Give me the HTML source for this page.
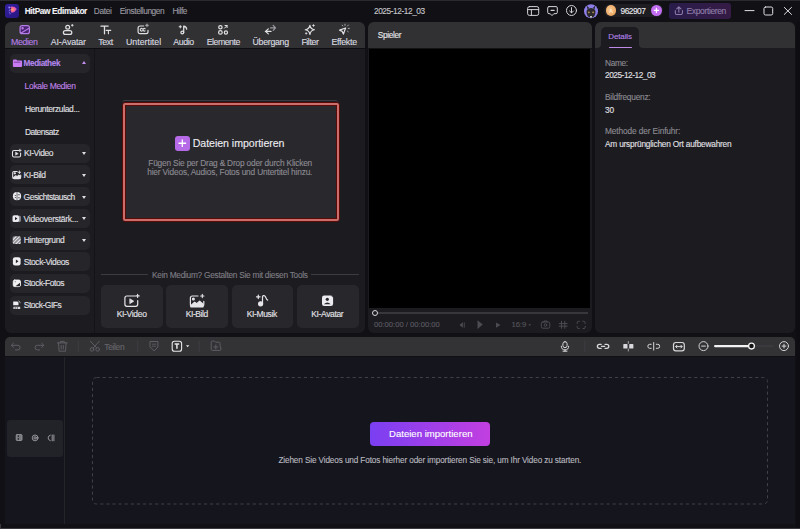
<!DOCTYPE html>
<html><head><meta charset="utf-8">
<style>
*{margin:0;padding:0;box-sizing:border-box}
html,body{width:800px;height:529px;overflow:hidden;background:#111015;font-family:"Liberation Sans",sans-serif;color:#e6e6ea}
.a{position:absolute}
.t{position:absolute;white-space:nowrap;line-height:10px;font-size:8px}
.tx{position:absolute;white-space:nowrap;line-height:12px;-webkit-text-stroke:0.12px currentColor}
svg{position:absolute;overflow:visible}
.si{position:absolute;left:10px;width:80px;height:19px;border-radius:5px;background:#26252a}
.sl{position:absolute;left:23.5px;font-size:7.7px;color:#dcdce0;line-height:10px;white-space:nowrap}
.car{position:absolute;left:82px;width:0;height:0;border-left:2.5px solid transparent;border-right:2.5px solid transparent;border-top:3px solid #e0e0e4}
.tl{position:absolute;top:37px;font-size:8.1px;color:#d4d4d8;line-height:10px;white-space:nowrap}
.card{position:absolute;top:285px;width:61.5px;height:42.5px;border-radius:5px;background:#28272c}
.cl{position:absolute;top:309px;font-size:8px;color:#e0e0e4;line-height:10px;white-space:nowrap}
</style></head>
<body>
<!-- title bar -->
<div class="a" style="left:0;top:0;width:800px;height:1px;background:#2b2a30"></div>
<div class="a" style="left:5px;top:4px;width:14px;height:13.5px;border-radius:3px;background:linear-gradient(135deg,#3220a0,#281680)"></div>
<svg style="left:0;top:0" width="22" height="22" viewBox="0 0 22 22"><defs><radialGradient id="lg" cx="0.35" cy="0.5" r="0.7"><stop offset="0" stop-color="#ffa060"/><stop offset="0.45" stop-color="#f0609a"/><stop offset="1" stop-color="#c040e0"/></radialGradient></defs>
<path d="M11 6.6q3.2-0.9 5.9 2.3q-1.7 3.3-5 3.9q-1.6-0.6-1.5-3.2q-0.4-2.2 0.6-3z" fill="url(#lg)"/>
<circle cx="9.3" cy="7.5" r="1" fill="#9a8cf8"/><circle cx="9.6" cy="10.3" r="0.9" fill="#7a6ae8"/><path d="M8.8 12.2l1.8 1.2M9.5 13.8l0.8 0.3" stroke="#8878f0" stroke-width="0.8"/><circle cx="10.6" cy="8.6" r="0.6" fill="#1a1060"/><circle cx="10.6" cy="11" r="0.5" fill="#1a1060"/></svg>


<!-- title right -->
<svg style="left:0;top:0" width="800" height="22" viewBox="0 0 800 22" fill="none" stroke-linecap="round" stroke-linejoin="round">
 <g stroke="#d4d4d8" stroke-width="1">
  <rect x="527.6" y="6.6" width="11.1" height="8.8" rx="1.8"/><path d="M527.6 9.6h11.1M531.4 9.6v5.8"/>
  <path d="M549 6.6h7a1.3 1.3 0 0 1 1.3 1.3v4.5a1.3 1.3 0 0 1-1.3 1.3h-2.2l-1.8 1.9-1.8-1.9h-1.2a1.3 1.3 0 0 1-1.3-1.3v-4.5a1.3 1.3 0 0 1 1.3-1.3z"/><path d="M551 10.3h3.2" stroke-width="1.2"/>
  <circle cx="571.5" cy="10.5" r="5"/><path d="M571.5 7.6v5M569.6 11l1.9 1.9 1.9-1.9"/>
 </g>
 <circle cx="591" cy="11.2" r="7" fill="#8c7ee6"/>
 <path d="M586.5 12q0-3.5 4.5-4q4.5 0.5 4.5 4q0 5-4.5 6q-4.5-1-4.5-6z" fill="#2a2a2c"/><path d="M587.5 9.5l-0.8-4 2.5 2.5M594.5 9.5l0.8-4-2.5 2.5" fill="#2a2a2c"/>
 <circle cx="588.9" cy="12.4" r="0.8" fill="#d8a050"/><circle cx="593.1" cy="12.4" r="0.8" fill="#d8a050"/><rect x="590" y="16.3" width="2" height="1.2" fill="#fff"/>
</svg>
<div class="a" style="left:603.5px;top:4.3px;width:59.5px;height:12.6px;border-radius:6.3px;background:#1e1d22"></div>
<div class="a" style="left:605.5px;top:5.2px;width:10.8px;height:10.8px;border-radius:50%;background:radial-gradient(circle at 40% 40%,#f8c890,#e89a50)"></div>
<div class="t" style="left:609px;top:6.2px;font-size:6px;color:#fff0dd">A</div>
<div class="a" style="left:651px;top:5.2px;width:10.8px;height:10.8px;border-radius:50%;background:#c36ef0"></div>
<svg style="left:651px;top:5.2px" width="11" height="11"><path d="M5.4 2.8v5.2M2.8 5.4h5.2" stroke="#fff" stroke-width="1.1"/></svg>
<div class="a" style="left:669.4px;top:2.5px;width:61.7px;height:16.4px;border-radius:3px;background:linear-gradient(90deg,#291c4a,#351b45)"></div>
<svg style="left:0;top:0" width="800" height="22" viewBox="0 0 800 22" fill="none" stroke-linecap="round" stroke-linejoin="round">
 <g stroke="#8e7cae" stroke-width="1.05"><path d="M678.85 6.8v5.4M676.7 8.9l2.15-2.1 2.15 2.1"/><path d="M675.3 10.6v2.4a1.4 1.4 0 0 0 1.4 1.4h4.3a1.4 1.4 0 0 0 1.4-1.4v-2.4"/></g>
 <g stroke="#e0e0e4" stroke-width="1"><path d="M745 10.6h9"/><rect x="764" y="7" width="8.7" height="8" rx="1.5"/><path d="M784.3 7.4l7.2 7M791.5 7.4l-7.2 7"/></g>
</svg>

<!-- left panel -->
<div class="a" style="left:5px;top:22px;width:360px;height:311px;border-radius:6px;background:#1c1b20;overflow:hidden">
  <div class="a" style="left:0;top:0;width:360px;height:26px;background:#313133"></div>
  <div class="a" style="left:0;top:26px;width:360px;height:1px;background:#0e0e11"></div>
  <div class="a" style="left:89px;top:27px;width:1px;height:284px;background:#141318"></div>
</div>
<!-- toolbar labels -->

<!-- sidebar -->
<div class="si" style="top:54px"></div>
<div class="a" style="left:82px;top:61px;width:0;height:0;border-left:2.5px solid transparent;border-right:2.5px solid transparent;border-bottom:3px solid #c48ef0"></div>
<div class="si" style="top:143.5px"></div><div class="car" style="top:151.5px"></div>
<div class="si" style="top:165.2px"></div><div class="car" style="top:173.5px"></div>
<div class="si" style="top:187px"></div><div class="car" style="top:195.5px"></div>
<div class="si" style="top:208.8px"></div><div class="car" style="top:217px"></div>
<div class="si" style="top:230.5px"></div><div class="car" style="top:238.5px"></div>
<div class="si" style="top:252.2px"></div>
<div class="si" style="top:273.9px"></div>
<div class="si" style="top:295.5px"></div>

<!-- import box -->
<div class="a" style="left:122.3px;top:100.3px;width:216px;height:3px;border-radius:3px 3px 0 0;border-top:1px solid #3c3b41"></div>
<div class="a" style="left:122px;top:102px;width:218.3px;height:120px;border:1px solid #5c0a08;border-radius:3px;background:#29282d"></div>
<div class="a" style="left:123px;top:103px;width:216.3px;height:118px;border:2px solid #c96e6a;border-radius:2px"></div>
<div class="a" style="left:125px;top:105px;width:212.3px;height:114px;border:0.7px solid #5c0a08"></div>
<div class="a" style="left:175px;top:136.2px;width:14.6px;height:14.5px;border-radius:3px;background:#b66ae8"></div>
<svg style="left:175px;top:136.2px" width="15" height="15"><path d="M7.3 3.5v7.5M3.5 7.25h7.6" stroke="#fff" stroke-width="1.3"/></svg>

<!-- tools -->
<div class="a" style="left:100.5px;top:274px;width:47px;height:1px;background:#3c3b41"></div>
<div class="a" style="left:310.5px;top:274px;width:48px;height:1px;background:#3c3b41"></div>
<div class="card" style="left:101.2px"></div>
<div class="card" style="left:166.3px"></div>
<div class="card" style="left:231.7px"></div>
<div class="card" style="left:297px"></div>


<!-- toolbar icons -->
<svg style="left:0;top:0" width="800" height="60" viewBox="0 0 800 60" fill="none" stroke-linecap="round" stroke-linejoin="round">
 <g stroke="#b57ee6" stroke-width="1.2"><rect x="20.1" y="25.7" width="9.3" height="8" rx="2" fill="#4a2472"/><path d="M21.2 33 L28.6 28.6"/><circle cx="22.6" cy="28.2" r="0.6" fill="#b57ee6"/></g>
 <g stroke="#e0e0e4" stroke-width="1.25">
  <circle cx="67.7" cy="27.2" r="1.9"/><rect x="63.4" y="30.5" width="8.4" height="3.9" rx="1.95"/>
  <path d="M72.3 24.4v1.8M71.4 25.3h1.8" stroke-width="0.9"/>
  <path d="M100.9 26.1h7.3M104.5 26.1v7.7" stroke-width="1.3"/><path d="M106.2 30.4h4.5M108.4 30.4v3.4" stroke-width="1.1"/>
  <path d="M143.6 26h-3.6a1.9 1.9 0 0 0-1.9 1.9v3.9a1.9 1.9 0 0 0 1.9 1.9h6.1a1.9 1.9 0 0 0 1.9-1.9v-1.5" stroke-width="1.2"/><path d="M142.3 28.7a1.3 1.3 0 1 0 0 2.1M145.1 28.7a1.3 1.3 0 1 0 0 2.1" stroke-width="1.1"/>
  <path d="M147 24v2.6M145.7 25.3h2.6" stroke-width="1.1" stroke="#b0b0b6"/>
  <circle cx="182.3" cy="32.4" r="1.4"/><path d="M183.7 32.4V26.1q2.5 0.3 3 3"/><path d="M180.3 25.6v2.3M179.15 26.75h2.3" stroke-width="1"/>
  <circle cx="220.4" cy="27.2" r="1.7"/><circle cx="220.4" cy="32.4" r="1.8"/><circle cx="225.9" cy="32.4" r="1.6"/><path d="M224.5 28.2l2.6-2.6M225 25.5h2.1v2.1" stroke-width="1"/>
  <path d="M271 31.4h-5.6M268.3 28.9l-2.8 2.5 2.8 2.5"/><path d="M270.5 27.9h4.8M273.2 25.4l2.3 2.5-2.3 2.5" stroke="#9a9aa0"/>
  <path d="M309.9 25.4q0.6 3.7 4.5 4.35q-3.9 0.65-4.5 4.6q-0.6-3.95-4.6-4.6q4-0.65 4.6-4.35z"/><path d="M313.5 24.6v1.8M312.6 25.5h1.8M306.2 32.6v1.6M305.4 33.4h1.6" stroke-width="0.8"/>
  <path d="M339.6 30.2l6-2.2-2.2 6.1-1.2-2.7z" stroke-width="1.25"/><path d="M342.2 25.2l0.5 0.7M345 24.2v1.2M348.4 25l-0.9 1M349.4 28.4h-1.2M348.3 31.8l-0.8-0.6" stroke-width="1" stroke="#a8a8ae"/>
 </g>
</svg>
<!-- sidebar icons -->
<svg style="left:0;top:0" width="100" height="320" viewBox="0 0 100 320" fill="none" stroke-linecap="round" stroke-linejoin="round">
 <path d="M12.9 60.5a1 1 0 0 1 1-1h2.4l1 1h3.8a1 1 0 0 1 1 1v4.6a1 1 0 0 1-1 1h-7.2a1 1 0 0 1-1-1z" fill="#c97cf2"/><path d="M14.3 62.2h5.7" stroke="#5a2a80" stroke-width="0.7"/>
 <g stroke="#e6e6ea" stroke-width="1.05">
  <path d="M18.6 150.4h-4.6a1.5 1.5 0 0 0-1.5 1.5v3.5a1.5 1.5 0 0 0 1.5 1.5h5.1a1.5 1.5 0 0 0 1.5-1.5v-2.3"/><path d="M15.8 152.3l2.4 1.35-2.4 1.35z" fill="#e6e6ea" stroke-width="0.6"/><path d="M19.9 149.2v2.4M18.7 150.4h2.4" stroke-width="0.9"/>
  <path d="M17.2 171.4h-3.2a1.3 1.3 0 0 0-1.3 1.3v4.6a1.3 1.3 0 0 0 1.3 1.3h5.4a1.3 1.3 0 0 0 1.3-1.3v-2.2"/><path d="M13.2 178l2.5-2.3 1.5 1 1.6-1.6 1.5 1.4v1.8h-7z" fill="#e6e6ea"/><circle cx="14.8" cy="173.3" r="0.6" fill="#e6e6ea"/><path d="M19.4 171v2.6M18.1 172.3h2.6" stroke-width="0.9"/>
 </g>
 <circle cx="17" cy="196.2" r="4.1" fill="#ececf0"/><path d="M17 192.2v8" stroke="#26252a" stroke-width="0.6"/><circle cx="15.3" cy="195.5" r="0.55" fill="#26252a"/><circle cx="15.3" cy="197.5" r="0.55" fill="#26252a"/><path d="M18.2 194.8h1.3M18.2 197.8h1.3" stroke="#26252a" stroke-width="0.7"/>
 <rect x="12.5" y="215.3" width="6.6" height="6.7" rx="1.6" fill="#ececf0"/><path d="M15 216.9l2.5 1.7-2.5 1.7z" fill="#26252a"/><path d="M19.3 215.4l1.3 1.2v4.6l-1.3 1z" fill="#bdbdc2"/>
 <g fill="#dcdce0"><rect x="12.6" y="236.3" width="8.2" height="7.7" rx="1.5" fill="#8a8a90"/>
  <path d="M13 239l2.5-2.5h1.5l-4 4zM13 242.5l6-6h1.3l-7.3 7.3zM15 244l5.5-5.5v1.5l-4 4zM18.5 244l2-2v1.4l-0.6 0.6z" fill="#ececf0"/></g>
 <rect x="12.9" y="257.2" width="7.7" height="8.3" rx="2.1" fill="#f0f0f2"/><path d="M15.9 259.4l2.6 1.95-2.6 1.95z" fill="#26252a"/>
 <rect x="13.3" y="280.1" width="7.1" height="6.5" rx="1.4" stroke="#f0f0f2" stroke-width="1" fill="#f0f0f2"/><path d="M15.4 286.3l4.6-3.6v3.6z" fill="#26252a"/><circle cx="15.3" cy="281.7" r="0.7" fill="#9a9aa0"/>
 <path d="M13.2 301.4h4.2l1.1 1.1v2.8h-5.3z" fill="#f0f0f2"/><path d="M18.8 301.2l1.4 1.3" stroke="#e6e6ea" stroke-width="0.9"/><path d="M13.4 306.8h6.8v2.2h-6.8z" fill="#dcdce0"/><path d="M15.2 307.4v1.2M17.3 307.4v1.2" stroke="#26252a" stroke-width="0.6"/>
 <g fill="#e0e0e4"></g>
</svg>
<!-- card icons -->
<svg style="left:0;top:0" width="400" height="330" viewBox="0 0 400 330" fill="none" stroke-linecap="round" stroke-linejoin="round">
 <g stroke="#e6e6ea" stroke-width="1.2">
  <path d="M135.2 296h-8.3a2 2 0 0 0-2 2v6.3a2 2 0 0 0 2 2h8.8a2 2 0 0 0 2-2v-3.8"/><path d="M130.1 299l3.6 2.2-3.6 2.2z" fill="#e6e6ea" stroke-width="0.8"/><path d="M137.6 294.3v3.2M136 295.9h3.2" stroke-width="1.1"/>
  <path d="M198 296h-5.6a2 2 0 0 0-2 2v6.3a2 2 0 0 0 2 2h9.4a2 2 0 0 0 2-2v-3"/><path d="M190.8 305.8l3.8-3.5 2.2 1.5 2.8-2.6 3.3 2.7v3h-12z" fill="#e6e6ea"/><circle cx="193.4" cy="298.9" r="0.9" fill="#e6e6ea"/><path d="M202.3 294.3v3.3M200.65 295.95h3.3" stroke-width="1.1"/>
  <circle cx="260.6" cy="303.8" r="2" fill="#e6e6ea"/><path d="M262.5 303.8v-7.2q0.6-1.5 2-0.9q1.2 0.8 1.6 2.4q0.4 1.6 1.6 2"/><path d="M258.3 295v3.6M256.5 296.8h3.6" stroke-width="1.2"/>
 </g>
 <rect x="322" y="295.5" width="11.1" height="10.5" rx="2.2" fill="#ececf0"/><circle cx="327.3" cy="299.3" r="1.6" fill="#28272c"/><path d="M323.9 304.2q3.4-3.4 6.8 0z" fill="#28272c"/><path d="M331.7 295.9l1.2 1.2" stroke="#28272c" stroke-width="0.8"/>
</svg>

<!-- player panel -->
<div class="a" style="left:368px;top:22px;width:223.5px;height:310.5px;border-radius:6px;background:#1c1b20;overflow:hidden">
  <div class="a" style="left:0;top:0;width:224px;height:26px;background:#313133"></div>
  <div class="a" style="left:0;top:26px;width:224px;height:1px;background:#141416"></div><div class="a" style="left:1px;top:26.6px;width:221px;height:259.4px;background:#000"></div>
  <div class="a" style="left:8px;top:289.5px;width:212px;height:2.3px;background:#38373c"></div>
</div>
<div class="a" style="left:371.5px;top:309.5px;width:6.5px;height:6.5px;border-radius:50%;border:1.4px solid #d8d8dc;background:#1c1b20"></div>


<svg style="left:0;top:0" width="800" height="340" viewBox="0 0 800 340" fill="none" stroke-linecap="round" stroke-linejoin="round">
 <g fill="#4c4b52"><path d="M462.8 322.2v5.6l-3.3-2.8z"/><rect x="463.8" y="322.4" width="0.9" height="5.2"/><path d="M477.5 320.2v8.8l5.3-4.4z"/><path d="M496 322.4v5.4l4.5-2.7z"/><path d="M528.3 324.3h2.9l-1.45 1.6z"/></g>
 <g stroke="#4c4b52" stroke-width="1"><rect x="541.3" y="322" width="8.5" height="6.2" rx="1.5"/><path d="M544 322v-1h3v1"/><circle cx="545.5" cy="325.1" r="1.3"/>
 <path d="M561.5 321.3v7M564.8 321.3v7M559.2 323.6h8M559.2 326.2h8"/>
 <path d="M577.2 323.5v-1a1.2 1.2 0 0 1 1.2-1.2h1M582.8 321.3h1a1.2 1.2 0 0 1 1.2 1.2v1M585.2 326.3v1a1.2 1.2 0 0 1-1.2 1.2h-1M579.4 328.5h-1a1.2 1.2 0 0 1-1.2-1.2v-1"/></g>
</svg>

<!-- details panel -->
<div class="a" style="left:595px;top:22px;width:200px;height:311px;border-radius:6px;background:#1c1b20;overflow:hidden">
  <div class="a" style="left:0;top:0;width:200px;height:26px;background:#313133"></div>
  <div class="a" style="left:6px;top:4.6px;width:38px;height:22px;border-radius:5px 5px 0 0;background:#1c1b20"></div>
  <div class="a" style="left:2px;top:22px;width:4px;height:4px;background:#1c1b20"></div><div class="a" style="left:2px;top:22px;width:4px;height:4px;background:#313133;border-bottom-right-radius:4px"></div>
  <div class="a" style="left:44px;top:22px;width:4px;height:4px;background:#1c1b20"></div><div class="a" style="left:44px;top:22px;width:4px;height:4px;background:#313133;border-bottom-left-radius:4px"></div>
  <div class="a" style="left:13.5px;top:24.6px;width:23.3px;height:1.4px;border-radius:1px;background:#c08ae8"></div>
</div>

<!-- timeline toolbar -->
<div class="a" style="left:5px;top:337px;width:790px;height:19px;border-radius:5px 5px 0 0;background:#333335"></div>
<!-- timeline -->
<div class="a" style="left:5px;top:356px;width:790px;height:168px;background:#15151e"></div>
<div class="a" style="left:64px;top:356px;width:1px;height:168px;background:#23232a"></div>
<div class="a" style="left:5px;top:355.6px;width:790px;height:1px;background:#111115"></div>
<div class="a" style="left:7.4px;top:420px;width:55.3px;height:36.6px;border-radius:3px;background:#222229"></div>
<svg style="left:0;top:0" width="800" height="529"><rect x="92.5" y="377.5" width="675" height="126.5" rx="4" fill="none" stroke="#40404a" stroke-width="1" stroke-dasharray="3.1 3"/></svg>
<div class="a" style="left:370.3px;top:422px;width:120px;height:24px;border-radius:4px;background:linear-gradient(90deg,#7a3ff2,#c23fe0)"></div>

<svg style="left:0;top:0" width="800" height="460" viewBox="0 0 800 460" fill="none" stroke-linecap="round" stroke-linejoin="round">
 <g stroke="#5e5d64" stroke-width="1">
  <path d="M13.5 343.2l-2.2 2.1 2.2 2.1M11.5 345.3h6.3a2.3 2.3 0 0 1 0 4.6h-2.3"/>
  <path d="M41.7 343.2l2.2 2.1-2.2 2.1M43.7 345.3h-6.3a2.3 2.3 0 0 0 0 4.6h2.3"/>
  <path d="M57.3 342.9h10M60.3 342.9v-1.5h4v1.5M58.5 342.9l0.6 8.3h6.4l0.6-8.3M61.2 345.5v3.5M63.3 345.5v3.5"/>
  <path d="M78.3 341v10.5" stroke="#3e3d43"/>
  <circle cx="92" cy="349.4" r="1.8"/><circle cx="97.7" cy="349.4" r="1.8"/><path d="M90.5 341.3l6 6.5M99.3 341.3l-6 6.5"/>
  <path d="M137.7 341v10.5" stroke="#3e3d43"/>
  <path d="M150.3 341.5h7.6v5.6l-3.8 3.8-3.8-3.8z"/><path d="M152.4 344.2h3.4M152.4 346.2h3.4" stroke-width="0.8"/>
  <path d="M199.2 341v10.5" stroke="#3e3d43"/>
  <path d="M220 345v-1.6a1.2 1.2 0 0 0-1.2-1.2h-3.2l-1.2-1.2h-2a1.2 1.2 0 0 0-1.2 1.2v7a1.2 1.2 0 0 0 1.2 1.2h7.4a1.2 1.2 0 0 0 1.2-1.2z"/><path d="M215.8 345v4M213.8 347h4"/>
 </g>
 <rect x="172.2" y="341.2" width="9.4" height="10" rx="2.3" stroke="#e6e6ea" stroke-width="1.1"/><path d="M174.6 344h4.6M176.9 344v4.8" stroke="#e6e6ea" stroke-width="1.5" stroke-linecap="butt"/>
 <path d="M186 345.2h3.3l-1.65 2z" fill="#e6e6ea"/>
 <g stroke="#d8d8dc" stroke-width="1">
  <rect x="562.9" y="341.7" width="4.2" height="6" rx="2.1"/><path d="M561.3 346.2a3.7 3.7 0 0 0 7.4 0M565 349.9v1.3M563 351.2h4"/>
  <path d="M584.8 341v10.5" stroke="#3e3d43"/>
  <path d="M601.2 344.3h-1.8a2 2 0 0 0 0 4h1.8M605 344.3h1.8a2 2 0 0 1 0 4h-1.8M601.5 346.3h3.2" stroke-width="1.3"/>
  <rect x="623.3" y="344.1" width="4.2" height="4.4" rx="0.6" fill="#d8d8dc" stroke="none"/><rect x="629.2" y="344.1" width="4.2" height="4.4" rx="0.6" fill="#d8d8dc" stroke="none"/><path d="M628.3 341.5v2M628.3 349v2" stroke-width="0.7"/>
  <path d="M651.2 344.3h-1.5a1.8 1.8 0 0 0-1.8 1.8v0.4a1.8 1.8 0 0 0 1.8 1.8h1.5M656.3 344.3h1.5a1.8 1.8 0 0 1 1.8 1.8v0.4a1.8 1.8 0 0 1-1.8 1.8h-1.5M653.7 342.5v7.6"/>
  <rect x="673.5" y="342.5" width="10.8" height="8.3" rx="2.3" stroke-width="1.2"/><path d="M675.8 346.6h6.2M676.9 345.3l-1.2 1.3 1.2 1.3M680.9 345.3l1.2 1.3-1.2 1.3"/>
  <circle cx="703.5" cy="346.1" r="4.5" stroke-width="0.95"/><path d="M701.6 346.1h3.8" stroke-width="1"/>
  <circle cx="784" cy="346.1" r="4.5" stroke-width="0.95"/><path d="M782.1 346.1h3.8M784 344.2v3.8" stroke-width="1"/>
 </g>
 <rect x="714" y="344.9" width="59.7" height="2.4" rx="1.2" fill="#3a393e"/>
 <rect x="714" y="344.9" width="37.5" height="2.4" rx="1.2" fill="#f2f2f4"/>
 <circle cx="751.5" cy="346.1" r="2.9" fill="#111" stroke="#f2f2f4" stroke-width="1.3"/>
 <g stroke="#a8a8ae" stroke-width="0.85" fill="none">
  <rect x="16.2" y="434.6" width="5.8" height="5.9" rx="0.9" fill="#77777e" stroke="#9a9aa0"/><path d="M18.3 435.6v1M18.3 438.4v1" stroke="#1a1a20" stroke-width="1"/>
  <circle cx="35.1" cy="437.9" r="2.9"/><circle cx="35.1" cy="437.9" r="1.2"/>
  <path d="M50.3 435.1a2.9 2.9 0 0 0 0 5.6"/><path d="M52.2 435v5.8M53.9 435v5.8" stroke-width="0.9"/>
 </g>
</svg>

<div class="a" style="left:796px;top:22px;width:4px;height:506px;background:#0e0e12"></div>
<div class="a" style="left:0;top:524px;width:1px;height:5px;background:#3a3a3e"></div>
<div class="a" style="left:0;top:528px;width:800px;height:1px;background:#3a3a3e"></div>
<!-- TEXTS -->
<div class="tx" style="left:24.75px;top:5.12px;font-size:8.3px;letter-spacing:-0.371px;color:#f2f2f4;font-weight:bold">HitPaw Edimakor</div>
<div class="tx" style="left:93.75px;top:5.12px;font-size:8.3px;letter-spacing:-0.294px;color:#9c9ba2">Datei</div>
<div class="tx" style="left:119.75px;top:5.12px;font-size:8.3px;letter-spacing:-0.413px;color:#9c9ba2">Einstellungen</div>
<div class="tx" style="left:172.50px;top:5.12px;font-size:8.3px;letter-spacing:-0.433px;color:#9c9ba2">Hilfe</div>
<div class="tx" style="left:374.00px;top:5.12px;font-size:8.3px;letter-spacing:-0.431px;color:#c8c8cc">2025-12-12_03</div>
<div class="tx" style="left:620.60px;top:5.12px;font-size:8.3px;letter-spacing:-0.500px;color:#ececf0">962907</div>
<div class="tx" style="left:686.50px;top:5.02px;font-size:8.6px;letter-spacing:-0.407px;color:#8f7ea8">Exportieren</div>
<div class="tx" style="left:11.00px;top:36.05px;font-size:8.8px;letter-spacing:-0.392px;color:#b57ee6">Medien</div>
<div class="tx" style="left:50.70px;top:36.05px;font-size:8.8px;letter-spacing:-0.160px;color:#dcdce0">AI-Avatar</div>
<div class="tx" style="left:98.25px;top:36.05px;font-size:8.8px;letter-spacing:-0.413px;color:#dcdce0">Text</div>
<div class="tx" style="left:126.00px;top:36.05px;font-size:8.8px;letter-spacing:-0.005px;color:#dcdce0">Untertitel</div>
<div class="tx" style="left:173.20px;top:36.05px;font-size:8.8px;letter-spacing:-0.402px;color:#dcdce0">Audio</div>
<div class="tx" style="left:206.70px;top:36.05px;font-size:8.8px;letter-spacing:-0.500px;color:#dcdce0">Elemente</div>
<div class="tx" style="left:252.50px;top:36.05px;font-size:8.8px;letter-spacing:-0.292px;color:#dcdce0">Übergang</div>
<div class="tx" style="left:301.40px;top:36.05px;font-size:8.8px;letter-spacing:-0.424px;color:#dcdce0">Filter</div>
<div class="tx" style="left:331.40px;top:36.05px;font-size:8.8px;letter-spacing:-0.255px;color:#dcdce0">Effekte</div>
<div class="tx" style="left:23.60px;top:58.1px;font-size:8.2px;letter-spacing:-0.4px;color:#b387ea;font-weight:bold">Mediathek</div>
<div class="tx" style="left:24.60px;top:79.65px;font-size:8.5px;letter-spacing:-0.330px;color:#c084e8">Lokale Medien</div>
<div class="tx" style="left:24.90px;top:102.75px;font-size:8.5px;letter-spacing:-0.374px;color:#e0e0e4">Herunterzulad...</div>
<div class="tx" style="left:24.90px;top:125.55px;font-size:8.5px;letter-spacing:-0.500px;color:#e0e0e4">Datensatz</div>
<div class="tx" style="left:24.00px;top:146.95px;font-size:8.5px;letter-spacing:-0.424px;color:#e0e0e4">KI-Video</div>
<div class="tx" style="left:23.60px;top:168.65px;font-size:8.5px;letter-spacing:-0.435px;color:#e0e0e4">KI-Bild</div>
<div class="tx" style="left:23.60px;top:190.85px;font-size:8.5px;letter-spacing:-0.500px;color:#e0e0e4">Gesichtstausch</div>
<div class="tx" style="left:23.60px;top:212.55px;font-size:8.5px;letter-spacing:-0.276px;color:#e0e0e4">Videoverstärk...</div>
<div class="tx" style="left:23.75px;top:234.35px;font-size:8.5px;letter-spacing:-0.334px;color:#e0e0e4">Hintergrund</div>
<div class="tx" style="left:23.75px;top:255.75px;font-size:8.5px;letter-spacing:-0.393px;color:#e0e0e4">Stock-Videos</div>
<div class="tx" style="left:23.75px;top:277.25px;font-size:8.5px;letter-spacing:-0.455px;color:#e0e0e4">Stock-Fotos</div>
<div class="tx" style="left:23.75px;top:298.65px;font-size:8.5px;letter-spacing:-0.500px;color:#e0e0e4">Stock-GIFs</div>
<div class="tx" style="left:192.70px;top:137.33px;font-size:10.6px;letter-spacing:-0.036px;color:#ececf0">Dateien importieren</div>
<div class="tx" style="left:148.30px;top:157.22px;font-size:8.3px;letter-spacing:-0.178px;color:#8c8b92">Fügen Sie per Drag &amp; Drop oder durch Klicken</div>
<div class="tx" style="left:147.20px;top:166.02px;font-size:8.3px;letter-spacing:-0.151px;color:#8c8b92">hier Videos, Audios, Fotos und Untertitel hinzu.</div>
<div class="tx" style="left:152.00px;top:269.12px;font-size:8.3px;letter-spacing:-0.257px;color:#7e7d84">Kein Medium? Gestalten Sie mit diesen Tools</div>
<div class="tx" style="left:116.70px;top:308.15px;font-size:8.5px;letter-spacing:-0.317px;color:#e4e4e8">KI-Video</div>
<div class="tx" style="left:185.70px;top:308.15px;font-size:8.5px;letter-spacing:-0.401px;color:#e4e4e8">KI-Bild</div>
<div class="tx" style="left:246.75px;top:308.15px;font-size:8.5px;letter-spacing:-0.365px;color:#e4e4e8">KI-Musik</div>
<div class="tx" style="left:311.30px;top:308.15px;font-size:8.5px;letter-spacing:-0.368px;color:#e4e4e8">KI-Avatar</div>
<div class="tx" style="left:377.75px;top:29.02px;font-size:8.3px;letter-spacing:-0.344px;color:#e8e8ec">Spieler</div>
<div class="tx" style="left:374.00px;top:318.97px;font-size:7.6px;letter-spacing:0.015px;color:#5c5b63">00:00:00 / 00:00:00</div>
<div class="tx" style="left:511.50px;top:318.87px;font-size:7.8px;letter-spacing:-0.15px;color:#55545b">16:9</div>
<div class="tx" style="left:608.35px;top:30.5px;font-size:8.0px;letter-spacing:-0.151px;color:#b384e8">Details</div>
<div class="tx" style="left:605.00px;top:56.92px;font-size:8.3px;letter-spacing:-0.333px;color:#8c8b92">Name:</div>
<div class="tx" style="left:605.00px;top:69.22px;font-size:8.3px;letter-spacing:-0.464px;color:#e0e0e4">2025-12-12_03</div>
<div class="tx" style="left:605.00px;top:91.12px;font-size:8.3px;letter-spacing:-0.235px;color:#8c8b92">Bildfrequenz:</div>
<div class="tx" style="left:605.00px;top:103.82px;font-size:8.3px;letter-spacing:0.000px;color:#e0e0e4">30</div>
<div class="tx" style="left:605.00px;top:125.32px;font-size:8.3px;letter-spacing:-0.115px;color:#8c8b92">Methode der Einfuhr:</div>
<div class="tx" style="left:605.00px;top:137.82px;font-size:8.3px;letter-spacing:-0.208px;color:#e0e0e4">Am ursprünglichen Ort aufbewahren</div>
<div class="tx" style="left:104.25px;top:340.80px;font-size:8.5px;letter-spacing:-0.346px;color:#66656c">Teilen</div>
<div class="tx" style="left:389.00px;top:428.21px;font-size:9.5px;letter-spacing:0.032px;color:#ffffff">Dateien importieren</div>
<div class="tx" style="left:278.40px;top:455.4px;font-size:8.2px;letter-spacing:-0.116px;color:#b8b8be">Ziehen Sie Videos und Fotos hierher oder importieren Sie sie, um Ihr Video zu starten.</div>
<!-- /TEXTS -->
</body></html>
